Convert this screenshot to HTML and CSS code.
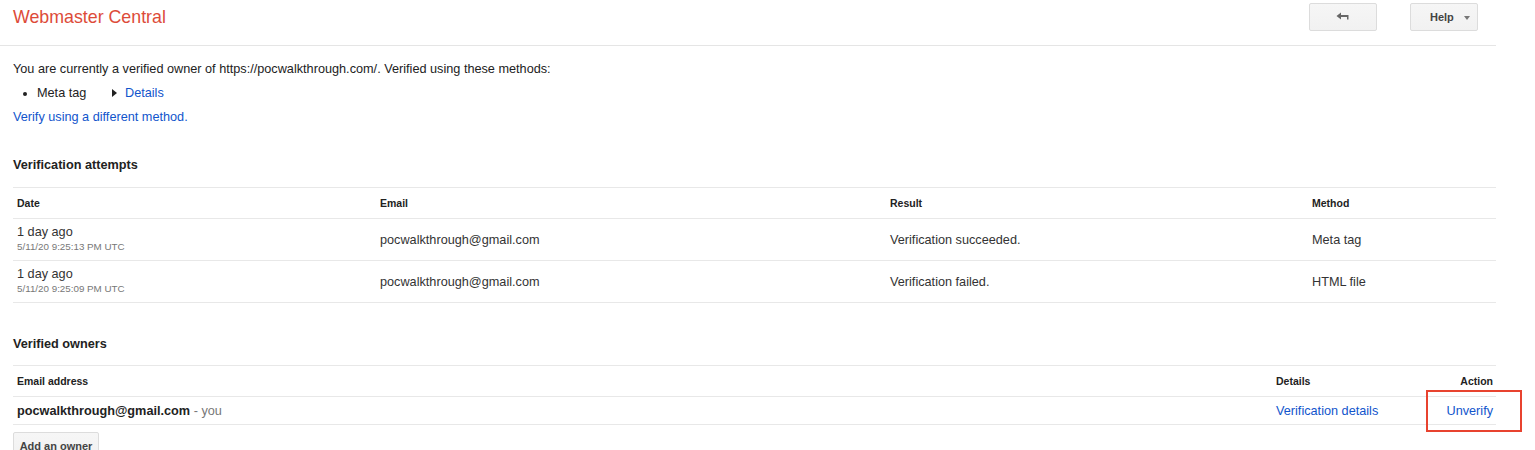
FILE: index.html
```html
<!DOCTYPE html>
<html>
<head>
<meta charset="utf-8">
<link rel="stylesheet" href="styles.css">
</head>
<body>
<div class="page">
  <header class="topbar">
    <div class="title">Webmaster Central</div>
    <div class="tools">
      <button class="btn back" aria-label="Back">
        <svg width="14" height="10" viewBox="0 0 14 10"><path d="M0.5 4 L5 0.5 L5 3 L12.5 3 L12.5 7.5 L11 7.5 L11 5 L5 5 L5 7.5 Z" fill="#666"/></svg>
      </button>
      <button class="btn help">Help <span class="caret"></span></button>
    </div>
  </header>

  <div class="content">
    <p class="line">You are currently a verified owner of https://pocwalkthrough.com/. Verified using these methods:</p>
    <ul class="methods">
      <li><span class="mname">Meta tag</span><span class="tri"></span><a class="link">Details</a></li>
    </ul>
    <p class="line"><a class="link">Verify using a different method.</a></p>

    <h2 class="heading h-first">Verification attempts</h2>
    <table class="grid attempts">
      <colgroup><col class="c1"><col class="c2"><col class="c3"><col class="c4"></colgroup>
      <thead><tr><th>Date</th><th>Email</th><th>Result</th><th>Method</th></tr></thead>
      <tbody>
        <tr class="r1"><td><div class="ago">1 day ago</div><div class="ts">5/11/20 9:25:13 PM UTC</div></td><td>pocwalkthrough@gmail.com</td><td>Verification succeeded.</td><td>Meta tag</td></tr>
        <tr class="r2"><td><div class="ago">1 day ago</div><div class="ts">5/11/20 9:25:09 PM UTC</div></td><td>pocwalkthrough@gmail.com</td><td>Verification failed.</td><td>HTML file</td></tr>
      </tbody>
    </table>

    <h2 class="heading h-second">Verified owners</h2>
    <table class="grid owners">
      <colgroup><col class="o1"><col class="o2"><col class="o3"></colgroup>
      <thead><tr><th>Email address</th><th>Details</th><th class="right">Action</th></tr></thead>
      <tbody>
        <tr><td><b class="owner">pocwalkthrough@gmail.com</b><span class="you"> - you</span></td><td><a class="link">Verification details</a></td><td class="right action"><a class="link">Unverify</a><span class="highlight"></span></td></tr>
      </tbody>
    </table>
    <button class="btn add">Add an owner</button>
  </div>
</div>
</body>
</html>
```

FILE: styles.css
```css
html, body { margin: 0; padding: 0; background: #fff; }
body { font-family: "Liberation Sans", Arial, sans-serif; color: #222; font-size: 12.7px; overflow: hidden; }
.page { width: 1496px; }
.topbar { height: 45px; border-bottom: 1px solid #e5e5e5; display: flex; align-items: flex-start; justify-content: space-between; }
.title { color: #dd4b39; font-size: 17.8px; line-height: 20px; padding: 7px 0 0 13px; }
.tools { display: flex; gap: 33px; padding: 3px 18px 0 0; }
.btn { font-family: "Liberation Sans", Arial, sans-serif; background: linear-gradient(#f6f6f6, #f1f1f1); border: 1px solid #dcdcdc; border-radius: 2px; color: #444; font-weight: bold; font-size: 11px; cursor: default; padding: 0; }
.back { width: 68px; height: 28px; display: flex; align-items: center; justify-content: center; }
.help { width: 68px; height: 28px; display: flex; align-items: center; justify-content: flex-start; padding-left: 19px; box-sizing: border-box; position: relative; }
.caret { position: absolute; right: 7px; top: 12px; width: 0; height: 0; border-left: 3.5px solid transparent; border-right: 3.5px solid transparent; border-top: 4px solid #777; }
.content { padding: 11px 0 0 13px; }
.line { margin: 0; line-height: 24px; }
.methods { margin: 0; padding: 0 0 0 24px; list-style: disc; line-height: 24px; }
.methods li { padding-left: 0; }
.mname { display: inline-block; width: 75px; }
.tri { display: inline-block; width: 0; height: 0; border-top: 4px solid transparent; border-bottom: 4px solid transparent; border-left: 5px solid #222; margin-right: 8px; vertical-align: 0px; }
.link { color: #15c; text-decoration: none; }
.heading { margin: 0; font-size: 12.7px; font-weight: bold; line-height: 20px; color: #222; }
.h-first { margin-top: 26px; margin-bottom: 12px; }
.h-second { margin-top: 31px; margin-bottom: 11px; }
.grid { width: 1483px; border-collapse: collapse; table-layout: fixed; }
.grid th { text-align: left; font-size: 10.5px; font-weight: bold; color: #222; height: 30px; padding: 0 4px; border-top: 1px solid #e8e8e8; border-bottom: 1px solid #e8e8e8; }
.grid td { padding: 0 4px; color: #333; border-bottom: 1px solid #e8e8e8; vertical-align: middle; }
.c1 { width: 363px; } .c2 { width: 510px; } .c3 { width: 422px; } .c4 { width: auto; }
.attempts tbody tr { height: 42px; }
.ago { font-size: 12.7px; line-height: 15px; color: #333; }
.ts { font-size: 9.8px; line-height: 14px; color: #777; }
.owners tbody tr { height: 28px; }
.o1 { width: 1259px; } .o2 { width: 150px; } .o3 { width: auto; }
.right { text-align: right !important; }
.grid .right { padding-right: 3px; }
.owner { color: #222; }
.you { color: #777; }
.action { position: relative; }
.highlight { position: absolute; left: 4px; top: -7px; width: 92px; height: 38px; border: 2px solid #e8432f; }
.add { margin-top: 7px; height: 28px; width: 86px; padding: 0; }
```
